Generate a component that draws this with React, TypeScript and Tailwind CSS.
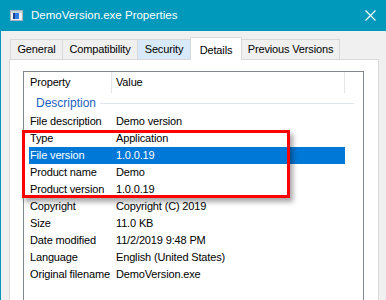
import React from 'react'

const font = { fontFamily: '"Liberation Sans", Arial, sans-serif' }

type Row = { name: string; value: string; selected?: boolean }

const rows: Row[] = [
  { name: 'File description', value: 'Demo version' },
  { name: 'Type', value: 'Application' },
  { name: 'File version', value: '1.0.0.19', selected: true },
  { name: 'Product name', value: 'Demo' },
  { name: 'Product version', value: '1.0.0.19' },
  { name: 'Copyright', value: 'Copyright (C) 2019' },
  { name: 'Size', value: '11.0 KB' },
  { name: 'Date modified', value: '11/2/2019 9:48 PM' },
  { name: 'Language', value: 'English (United States)' },
  { name: 'Original filename', value: 'DemoVersion.exe' },
]

const tabs = [
  { label: 'General', w: 'w-[53px]' },
  { label: 'Compatibility', w: 'w-[76px]' },
  { label: 'Security', w: 'w-[54px]', hover: true },
  { label: 'Details', w: 'w-[52px]', active: true },
  { label: 'Previous Versions', w: 'w-[99px]' },
]

// 标题栏小图标
const AppIcon = () => (
  <svg width="13" height="11" viewBox="0 0 13 11">
    <rect x="0.5" y="0.5" width="12" height="10" fill="#eef2f6" stroke="#a9b4bf" />
    <rect x="1" y="1" width="11" height="2" fill="#c9d3dc" />
    <rect x="3" y="3" width="2" height="6" fill="#1f3f8f" />
    <rect x="5" y="3" width="4" height="6" fill="#2f7de1" />
  </svg>
)

const CloseIcon = () => (
  <svg width="11" height="11" viewBox="0 0 11 11">
    <path d="M0.5 0.5 L10.5 10.5 M10.5 0.5 L0.5 10.5" stroke="#ffffff" strokeWidth="1.1" />
  </svg>
)

export default function App() {
  return (
    <div
      className="relative flex flex-col w-[386px] h-[300px] overflow-hidden border-l border-[#0099bc] bg-[#f0f0f0] text-[11px] text-black tracking-[-0.15px]"
      style={font}
    >
      {/* 标题栏 */}
      <div className="flex items-center justify-between h-[31px] shrink-0 bg-[#0099bc] pl-[9px] pr-[10px]">
        <div className="flex items-center gap-[8px]">
          <AppIcon />
          <span className="text-[11.5px] text-white tracking-normal">DemoVersion.exe Properties</span>
        </div>
        <CloseIcon />
      </div>

      {/* 主体 */}
      <div className="flex flex-col flex-1 min-h-0 pt-[6px] pl-[8px] pr-[7px]">
        {/* 标签页 */}
        <div className="flex items-end pl-[1px]">
          {tabs.map((t) => (
            <div
              key={t.label}
              className={
                t.active
                  ? `${t.w} h-[23px] -mb-px -ml-px relative z-10 flex items-start justify-center pt-[4px] bg-white border border-b-0 border-[#d9d9d9]`
                  : `${t.w} h-[20px] -ml-px first:ml-0 flex items-center justify-center border border-b-0 border-[#d9d9d9] ${t.hover ? 'bg-[#d8eaf9]' : 'bg-[#f0f0f0]'}`
              }
            >
              {t.label}
            </div>
          ))}
        </div>

        {/* 面板 */}
        <div className="flex flex-col flex-1 min-h-0 bg-white border border-b-0 border-[#d9d9d9]">
          <div className="flex flex-col flex-1 min-h-0 mt-[11px] ml-[13px] mr-[14px] border border-b-0 border-[#828790]">
            {/* 表头 */}
            <div className="flex h-[21px] shrink-0">
              <div className="w-[88px] h-full flex items-center pl-[6px] border-r border-[#e5e5e5]">Property</div>
              <div className="w-[233px] h-full flex items-center pl-[4px] border-r border-[#e5e5e5]">Value</div>
            </div>

            {/* 分组标题 */}
            <div className="flex items-center h-[20px] shrink-0 pl-[12px] pr-[9px]">
              <span className="text-[12px] text-[#1e5fbf] tracking-normal">Description</span>
              <div className="flex-1 h-px ml-[4px] bg-[#e0e6f0]" />
            </div>

            {/* 属性行 */}
            {rows.map((r) => (
              <div
                key={r.name}
                className={`flex items-center h-[17px] shrink-0 ml-[5px] w-[316px] ${r.selected ? 'bg-[#0078d7] text-white' : ''}`}
              >
                <div className="w-[82px] pl-[1px] whitespace-nowrap">{r.name}</div>
                <div className="pl-[5px] whitespace-nowrap">{r.value}</div>
              </div>
            ))}
          </div>
        </div>
      </div>

      {/* 红色标注框 */}
      <div className="absolute left-[21px] top-[130px] w-[268px] h-[68px] border-[3px] border-[#ff0000] shadow-[3px_4px_5px_rgba(0,0,0,0.35)]" />
    </div>
  )
}
